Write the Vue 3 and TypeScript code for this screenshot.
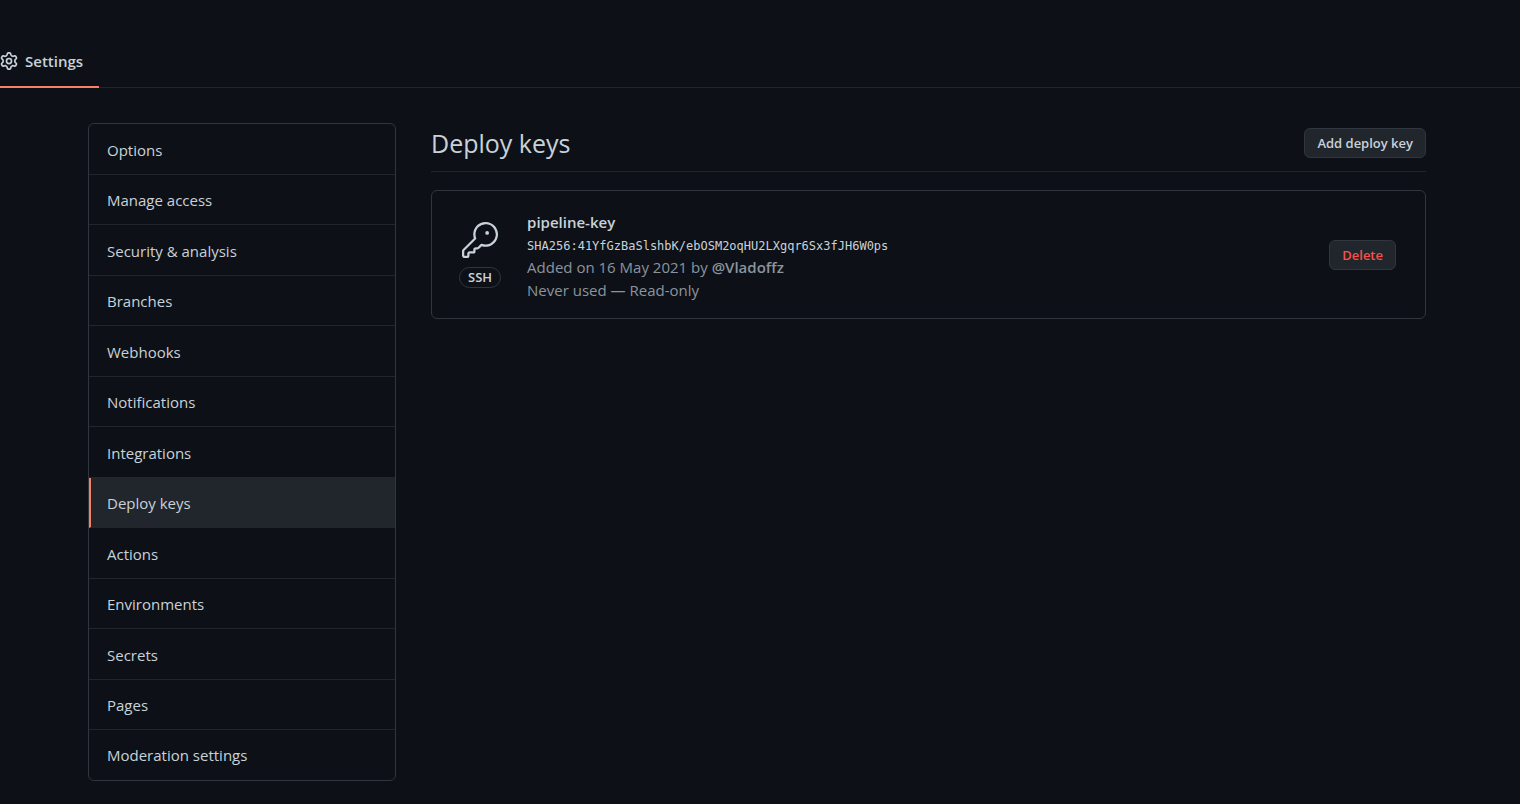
<script setup lang="ts">
interface MenuItem {
  label: string
  current?: boolean
}

const menu: MenuItem[] = [
  { label: 'Options' },
  { label: 'Manage access' },
  { label: 'Security & analysis' },
  { label: 'Branches' },
  { label: 'Webhooks' },
  { label: 'Notifications' },
  { label: 'Integrations' },
  { label: 'Deploy keys', current: true },
  { label: 'Actions' },
  { label: 'Environments' },
  { label: 'Secrets' },
  { label: 'Pages' },
  { label: 'Moderation settings' },
]
</script>

<template>
  <div class="page">
    <nav class="tabs" aria-label="Repository">
      <a class="tab" href="#settings">
        <svg class="gear" viewBox="0 0 16 16" aria-hidden="true">
          <path fill-rule="evenodd" d="M7.429 1.525a6.593 6.593 0 011.142 0c.036.003.108.036.137.146l.289 1.105c.147.56.55.967.997 1.189.174.086.341.183.501.29.417.278.97.423 1.53.27l1.102-.303c.11-.03.175.016.195.046.219.31.41.641.573.989.014.031.022.11-.059.19l-.815.806c-.411.406-.562.957-.53 1.456a4.588 4.588 0 010 .582c-.032.499.119 1.05.53 1.456l.815.806c.08.08.073.159.059.19a6.494 6.494 0 01-.573.99c-.02.029-.086.074-.195.045l-1.103-.303c-.559-.153-1.112-.008-1.529.27-.16.107-.327.204-.5.29-.449.222-.851.628-.998 1.189l-.289 1.105c-.029.11-.101.143-.137.146a6.613 6.613 0 01-1.142 0c-.036-.003-.108-.037-.137-.146l-.289-1.105c-.147-.56-.55-.967-.997-1.189a4.502 4.502 0 01-.501-.29c-.417-.278-.97-.423-1.53-.27l-1.102.303c-.11.03-.175-.016-.195-.046a6.492 6.492 0 01-.573-.989c-.014-.031-.022-.11.059-.19l.815-.806c.411-.406.562-.957.53-1.456a4.587 4.587 0 010-.582c.032-.499-.119-1.05-.53-1.456l-.815-.806c-.08-.08-.073-.159-.059-.19a6.44 6.44 0 01.573-.99c.02-.029.086-.075.195-.045l1.103.303c.559.153 1.112.008 1.529-.27.16-.107.327-.204.5-.29.449-.222.851-.628.998-1.189l.289-1.105c.029-.11.101-.143.137-.146zM8 0c-.236 0-.47.01-.701.03-.743.065-1.29.615-1.458 1.261l-.29 1.106c-.017.066-.078.158-.211.224a5.994 5.994 0 00-.668.386c-.123.082-.233.09-.3.071L3.27 2.776c-.644-.177-1.392.02-1.82.63a7.977 7.977 0 00-.704 1.217c-.315.675-.111 1.422.363 1.891l.815.806c.05.048.098.147.088.294a6.084 6.084 0 000 .772c.01.147-.038.246-.088.294l-.815.806c-.474.469-.678 1.216-.363 1.891.2.428.436.835.704 1.218.428.609 1.176.806 1.82.63l1.103-.303c.066-.019.176-.011.299.071.213.143.436.272.668.386.133.066.194.158.212.224l.289 1.106c.169.646.715 1.196 1.458 1.26a8.094 8.094 0 001.402 0c.743-.064 1.29-.614 1.458-1.26l.29-1.106c.017-.066.078-.158.211-.224a5.98 5.98 0 00.668-.386c.123-.082.233-.09.3-.071l1.102.302c.644.177 1.392-.02 1.82-.63.268-.382.505-.789.704-1.217.315-.675.111-1.422-.364-1.891l-.814-.806c-.05-.048-.098-.147-.088-.294a6.1 6.1 0 000-.772c-.01-.147.039-.246.088-.294l.814-.806c.475-.469.679-1.216.364-1.891a7.992 7.992 0 00-.704-1.218c-.428-.609-1.176-.806-1.82-.63l-1.103.303c-.066.019-.176.011-.299-.071a5.991 5.991 0 00-.668-.386c-.133-.066-.194-.158-.212-.224L10.16 1.29C9.99.645 9.444.095 8.701.031A8.094 8.094 0 008 0zm1.5 8a1.5 1.5 0 11-3 0 1.5 1.5 0 013 0zM11 8a3 3 0 11-6 0 3 3 0 016 0z" />
        </svg>
        <span>Settings</span>
      </a>
    </nav>

    <div class="layout">
      <nav class="menu" aria-label="Settings">
        <a
          v-for="item in menu"
          :key="item.label"
          class="menu-item"
          :class="{ current: item.current }"
          :aria-current="item.current ? 'page' : undefined"
          href="#"
        >{{ item.label }}</a>
      </nav>

      <main class="content">
        <header class="subhead">
          <h1>Deploy keys</h1>
          <button type="button" class="btn">Add deploy key</button>
        </header>

        <section class="key-card">
          <div class="key-type">
            <svg class="key-icon" viewBox="0 0 24 24" aria-hidden="true">
              <path d="M16.75 8.5a1.25 1.25 0 100-2.5 1.25 1.25 0 000 2.5z" />
              <path fill-rule="evenodd" d="M15.75 0a8.25 8.25 0 00-7.851 10.79L.513 18.178A1.75 1.75 0 000 19.414v2.836C0 23.217.784 24 1.75 24h1.5A1.75 1.75 0 005 22.25v-1a.25.25 0 01.25-.25h2.735a.75.75 0 00.545-.22l.214-.213A.875.875 0 009 19.948V18.5a.25.25 0 01.25-.25h1.086c.464 0 .91-.184 1.237-.513l1.636-1.636A8.25 8.25 0 1015.75 0zM9 8.25a6.75 6.75 0 114.288 6.287.75.75 0 00-.804.168l-1.971 1.972a.25.25 0 01-.177.073H9.25A1.75 1.75 0 007.5 18.5v1H5.25a1.75 1.75 0 00-1.75 1.75v1a.25.25 0 01-.25.25h-1.5a.25.25 0 01-.25-.25v-2.836a.25.25 0 01.073-.177l7.722-7.721a.75.75 0 00.168-.804A6.73 6.73 0 019 8.25z" />
            </svg>
            <span class="badge">SSH</span>
          </div>
          <div class="key-info">
            <strong class="key-name">pipeline-key</strong>
            <code class="fingerprint">SHA256:41YfGzBaSlshbK/ebOSM2oqHU2LXgqr6Sx3fJH6W0ps</code>
            <span class="meta">Added on 16 May 2021 by <a class="author" href="#">@Vladoffz</a></span>
            <span class="meta">Never used — Read-only</span>
          </div>
          <button type="button" class="btn danger">Delete</button>
        </section>
      </main>
    </div>
  </div>
</template>

<style>
body {
  margin: 0;
  background: #0d1117;
}
</style>

<style scoped>
.page {
  color: #c9d1d9;
  font-family: "Segoe UI", "Open Sans", "Noto Sans", sans-serif;
  font-size: 15px;
  line-height: 24px;
}

a {
  color: inherit;
  text-decoration: none;
}

.tabs {
  display: flex;
  padding-top: 36px;
  box-shadow: inset 0 -1px #21262d;
}

.tab {
  display: flex;
  align-items: center;
  gap: 7px;
  padding: 13px 16px 13px 0;
  border-bottom: 2px solid #f78166;
  font-weight: 600;
}

.gear {
  width: 18px;
  height: 18px;
  fill: #c9d1d9;
}

.layout {
  display: grid;
  grid-template-columns: 308px minmax(0, 1fr);
  gap: 35px;
  align-items: start;
  padding: 35px 94px 23px 88px;
}

.menu {
  overflow: hidden;
  border: 1px solid #30363d;
  border-radius: 6px;
}

.menu-item {
  display: block;
  padding: 14px 18px 12px;
  border-bottom: 1px solid #21262d;
}

.menu-item:nth-child(even) {
  padding-top: 13px;
}

.menu-item:last-child {
  padding-top: 13px;
  padding-bottom: 13px;
  border-bottom: 0;
}

.menu-item.current {
  padding-left: 16px;
  border-left: 2px solid #f78166;
  background: #21262d;
}

.subhead {
  display: flex;
  align-items: center;
  justify-content: space-between;
  padding: 3px 0 11px;
  border-bottom: 1px solid #21262d;
}

h1 {
  margin: 0;
  font-size: 25px;
  font-weight: 400;
  line-height: 34px;
}

.btn {
  padding: 4px 12px;
  border: 1px solid #30363d;
  border-radius: 6px;
  background: #21262d;
  color: #c9d1d9;
  font-family: inherit;
  font-size: 13px;
  font-weight: 600;
  line-height: 20px;
}

.btn.danger {
  color: #f85149;
}

.key-card {
  display: flex;
  align-items: center;
  margin-top: 18px;
  padding: 17px 29px 16px 27px;
  border: 1px solid #30363d;
  border-radius: 6px;
}

.key-type {
  display: flex;
  flex-direction: column;
  align-items: center;
  gap: 9px;
  margin-right: 26px;
}

.key-icon {
  width: 36px;
  height: 36px;
  fill: #c9d1d9;
}

.badge {
  padding: 0 8px;
  border: 1px solid #30363d;
  border-radius: 20px;
  font-size: 13px;
  font-weight: 600;
  line-height: 19px;
}

.key-info {
  display: flex;
  flex: 1;
  flex-direction: column;
  min-width: 0;
}

.key-name {
  font-weight: 600;
  line-height: 28px;
}

.fingerprint {
  font-family: "DejaVu Sans Mono", monospace;
  font-size: 12px;
  line-height: 20px;
}

.meta {
  color: #8b949e;
  line-height: 23px;
}

.author {
  font-weight: 600;
}
</style>
